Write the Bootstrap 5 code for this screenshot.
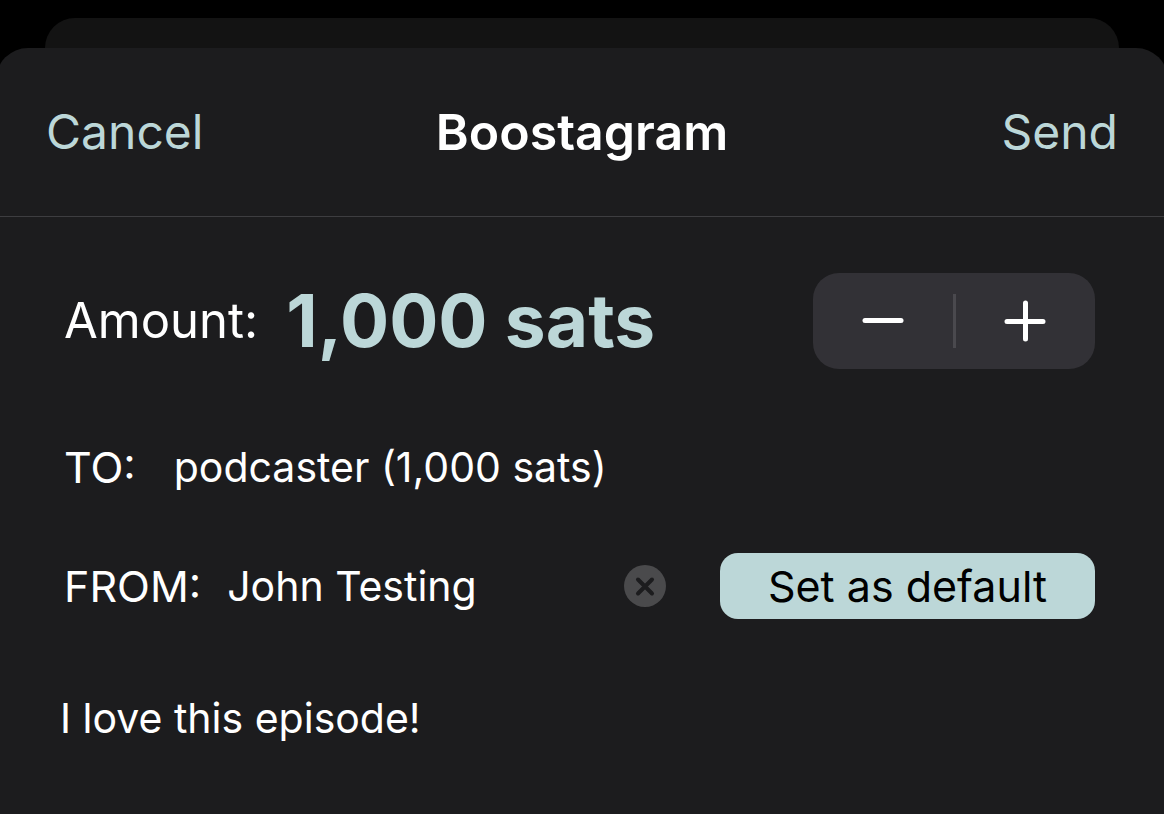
<!DOCTYPE html>
<html lang="en" data-bs-theme="dark">
<head>
<meta charset="utf-8">
<meta name="viewport" content="width=device-width, initial-scale=1">
<title>Boostagram</title>
<link href="https://cdn.jsdelivr.net/npm/bootstrap@5.3.0/dist/css/bootstrap.min.css" rel="stylesheet">
<style>
:root { --accent: #bcd7d8; --sheet: #1c1c1e; }
body { background: #000; color: #fff; font-family: Inter, "Liberation Sans", sans-serif; font-size: 41px; line-height: 56px; }
button, input, textarea { font: inherit; color: inherit; }
.sheet-stack { min-height: 100vh; overflow: hidden; }
.sheet-behind { height: 30px; margin: 18px 45px 0; background: #131313; border-radius: 30px 30px 0 0; }
.sheet { margin: 0 -4px; padding: 0 4px; background: var(--sheet); border-radius: 32px 32px 0 0; }
.sheet-header { display: grid; grid-template-columns: 1fr auto 1fr; height: 169px; padding: 0 46px; border-bottom: 1px solid #3d3d40; }
.sheet-header h1 { font-size: 50px; font-weight: 600; }
.plain-btn { background: none; border: 0; padding: 0; color: var(--accent); font-size: 48px; }
.sheet-body { padding: 56px 69px 48px 64px; }
.amount-label { font-size: 49px; }
.amount-value { margin-left: 28px; font-size: 73px; line-height: 96px; font-weight: 700; color: var(--accent); }
.stepper { width: 282px; height: 96px; border-radius: 26px; background: #323136; }
.stepper button { background: none; border: 0; padding: 0; }
.stepper svg, .clear-btn svg { display: block; margin: 0 auto; }
.stepper-rule { width: 3px; height: 54px; background: #4a494e; }
.row-label { font-size: 43px; }
.to-row { margin-top: 70px; gap: 38px; }
.from-row { margin-top: 58px; gap: 26px; }
.text-entry { background: none; border: 0; padding: 0; outline: 0; resize: none; min-width: 0; }
.from-row .text-entry { flex: 1 1 0; }
.clear-btn { background: none; border: 0; padding: 0; }
.default-btn { width: 375px; height: 66px; margin-left: 28px; padding: 0; border: 0; border-radius: 18px; background: var(--accent); color: #000; font-size: 43px; }
.message { display: block; margin-top: 71px; margin-left: -4px; overflow: hidden; }
</style>
</head>
<body>
<div class="sheet-stack d-flex flex-column">
<div class="sheet-behind"></div>
<form class="sheet flex-grow-1" onsubmit="return false">
  <header class="sheet-header align-items-center">
    <button type="button" class="plain-btn text-start">Cancel</button>
    <h1 class="m-0">Boostagram</h1>
    <button type="submit" class="plain-btn text-end">Send</button>
  </header>
  <main class="sheet-body">
    <div class="d-flex align-items-center">
      <label class="amount-label" for="amount">Amount:</label>
      <output id="amount" class="amount-value me-auto">1,000 sats</output>
      <div class="stepper d-flex align-items-center" role="group" aria-label="Amount">
        <button type="button" class="flex-fill" aria-label="Decrease"><svg width="42" height="42" viewBox="0 0 42 42" fill="none" stroke="#fff" stroke-width="5" stroke-linecap="round"><path d="M3 20.500h36"/></svg></button>
        <span class="stepper-rule"></span>
        <button type="button" class="flex-fill" aria-label="Increase"><svg width="42" height="42" viewBox="0 0 42 42" fill="none" stroke="#fff" stroke-width="5" stroke-linecap="round"><path d="M3 21.500h36M21.500 3v36"/></svg></button>
      </div>
    </div>
    <div class="to-row d-flex align-items-center">
      <span class="row-label">TO:</span>
      <span>podcaster (1,000 sats)</span>
    </div>
    <div class="from-row d-flex align-items-center">
      <label class="row-label" for="sender">FROM:</label>
      <input id="sender" class="text-entry" type="text" value="John Testing">
      <button type="button" class="clear-btn" aria-label="Clear name"><svg width="42" height="42" viewBox="0 0 42 42"><circle cx="21" cy="21" r="21" fill="#4a4a4c"/><path d="M14 14.500 28 28.500M28 14.500 14 28.500" stroke="#1c1c1e" stroke-width="4" stroke-linecap="round"/></svg></button>
      <button type="button" class="default-btn flex-shrink-0 text-nowrap">Set as default</button>
    </div>
    <textarea class="text-entry message w-100" rows="1" aria-label="Message">I love this episode!</textarea>
  </main>
</form>
</div>
</body>
</html>
